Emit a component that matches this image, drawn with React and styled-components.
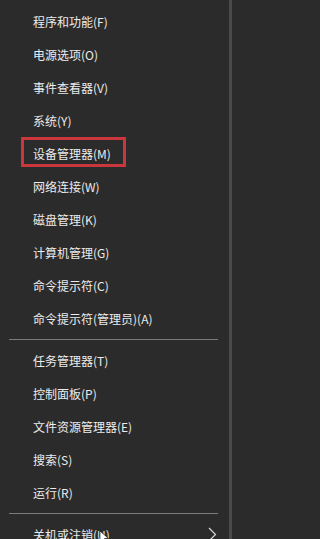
import React from "react";
import styled, { createGlobalStyle } from "styled-components";

const GlobalStyle = createGlobalStyle`
  html, body {
    margin: 0;
    padding: 0;
    background: #2b2b2b;
    overflow: hidden;
  }
`;

// Win+X style context menu
const Menu = styled.div`
  position: relative;
  width: 232px;
  height: 539px;
  box-sizing: border-box;
  padding-top: 5px;
  background-color: #2b2b2b;
  border-right: 3px solid #4a4a4a;
  font-family: "Noto Sans CJK SC", "Noto Sans", sans-serif;
  font-size: 12px;
  color: #ececec;
  overflow: hidden;
`;

const Item = styled.div`
  position: relative;
  display: flex;
  align-items: center;
  height: 33px;
  padding-left: 33px;
  padding-right: 10px;
  white-space: nowrap;
`;

const Label = styled.span`
  flex: 1;
`;

// red annotation frame drawn over the item
const Highlight = styled.div`
  position: absolute;
  left: 21px;
  top: 0;
  width: 105px;
  height: 30px;
  box-sizing: border-box;
  border: 3px solid #c9373d;
`;

const Separator = styled.div`
  height: 1px;
  margin: 4px 11px 4px 9px;
  background-color: #7a7a7a;
`;

const Chevron = styled.svg`
  width: 9px;
  height: 15px;
  margin-right: 2px;
`;

const Cursor = styled.svg`
  position: absolute;
  left: 99px;
  top: 531px;
  width: 10px;
  height: 12px;
`;

const groups = [
  [
    "程序和功能(F)",
    "电源选项(O)",
    "事件查看器(V)",
    "系统(Y)",
    "设备管理器(M)",
    "网络连接(W)",
    "磁盘管理(K)",
    "计算机管理(G)",
    "命令提示符(C)",
    "命令提示符(管理员)(A)",
  ],
  ["任务管理器(T)", "控制面板(P)", "文件资源管理器(E)", "搜索(S)", "运行(R)"],
];

export default function App() {
  return (
    <>
      <GlobalStyle />
      <Menu>
        {groups.map((items, gi) => (
          <React.Fragment key={gi}>
            {items.map((text) => (
              <Item key={text}>
                {text === "设备管理器(M)" && <Highlight />}
                <Label>{text}</Label>
              </Item>
            ))}
            <Separator />
          </React.Fragment>
        ))}
        <Item>
          <Label>关机或注销(U)</Label>
          <Chevron viewBox="0 0 9 15">
            <path d="M1 1 L7.5 7.5 L1 14" fill="none" stroke="#d8d8d8" strokeWidth="1.2" />
          </Chevron>
        </Item>
        <Cursor viewBox="0 0 10 12">
          <path d="M1 0 L1 11 L4 8 L6.5 12 L8 11 L5.5 7.5 L9.5 7.5 Z" fill="#ffffff" stroke="#000" strokeWidth="0.6" />
        </Cursor>
      </Menu>
    </>
  );
}
